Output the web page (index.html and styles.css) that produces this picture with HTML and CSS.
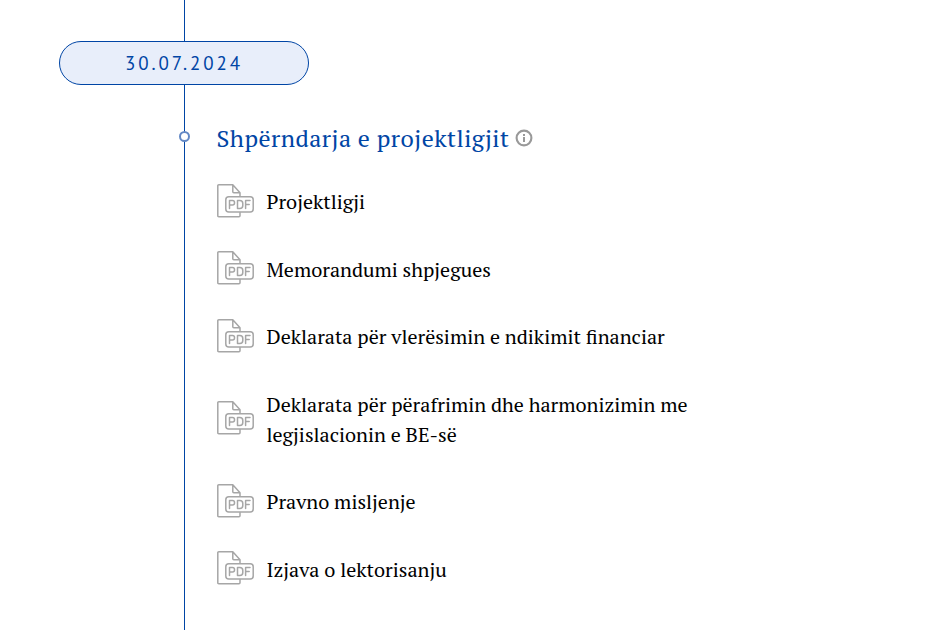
FILE: index.html
```html
<!DOCTYPE html>
<html lang="sq">
<head>
<meta charset="utf-8">
<title>Shpërndarja e projektligjit</title>
<link rel="stylesheet" href="styles.css">
</head>
<body>
<svg class="defs" aria-hidden="true">
  <symbol id="pdf" viewBox="0 0 37 34">
    <g fill="none" stroke="#a6a6a6" stroke-width="1.5" stroke-linejoin="round" stroke-linecap="round">
      <path d="M23 28.5V31.8Q23 32.7 22 32.7H1.8Q.8 32.7 .8 31.7V1.8Q.8 .8 1.8 .8H15.8L23 8.8V12.3M15.8 .8V7.8Q15.8 8.8 16.8 8.8H23"/>
      <rect x="8.8" y="12.8" width="27.4" height="15.2" rx="3"/>
      <path d="M12.5 24.5V16.5H15.5Q17.5 16.5 17.5 18.5V19.1Q17.5 21.1 15.5 21.1H12.5M20.5 16.5V24.5H22.8Q25.8 24.5 25.8 21.5V19.5Q25.8 16.5 22.8 16.5ZM28.6 24.5V16.5H33M28.6 20.5H32.2"/>
    </g>
  </symbol>
</svg>
<main class="timeline">
  <div class="date">30.07.2024</div>
  <section class="event">
    <h2 class="title"><span class="title-text">Shpërndarja e projektligjit</span>
      <svg class="info" viewBox="0 0 18 18"><circle cx="9" cy="9" r="7.4" fill="none" stroke="#999" stroke-width="2.1"/><path d="M8 5h2v2H8zM8 8h2v5H8z" fill="#999"/></svg>
    </h2>
    <ul class="files">
      <li><svg class="pdf"><use href="#pdf"/></svg><span class="name">Projektligji</span></li>
      <li><svg class="pdf"><use href="#pdf"/></svg><span class="name">Memorandumi shpjegues</span></li>
      <li><svg class="pdf"><use href="#pdf"/></svg><span class="name">Deklarata për vlerësimin e ndikimit financiar</span></li>
      <li><svg class="pdf"><use href="#pdf"/></svg><span class="name">Deklarata për përafrimin dhe harmonizimin me legjislacionin e BE-së</span></li>
      <li><svg class="pdf"><use href="#pdf"/></svg><span class="name">Pravno misljenje</span></li>
      <li><svg class="pdf"><use href="#pdf"/></svg><span class="name">Izjava o lektorisanju</span></li>
    </ul>
  </section>
</main>
</body>
</html>
```
FILE: styles.css
```css
*, *::before { box-sizing: border-box; }
body { margin: 0; background: #fff; overflow: hidden; }
.defs { display: none; }
.timeline {
  height: 630px;
  padding: 41px 0 0 59px;
  background: linear-gradient(#0045a5, #0045a5) 184px 0 / 1px 100% no-repeat;
  font-family: "PT Serif", "Liberation Serif", serif;
}
.date {
  width: 250px;
  height: 44px;
  border: 1px solid #0045a5;
  border-radius: 22px;
  background: #e8eefa;
  color: #0045a5;
  font: 19px/43px "PT Sans", "Noto Sans", sans-serif;
  letter-spacing: 2.9px;
  text-align: center;
}
.event { position: relative; padding: 33px 0 0 158px; }
.event::before {
  content: "";
  position: absolute;
  left: 120px;
  top: 46px;
  width: 11px;
  height: 11px;
  border: 2px solid #6288c5;
  border-radius: 50%;
  background: #fff;
}
.title {
  display: flex;
  align-items: center;
  height: 40px;
  margin: 0 0 0 -0.5px;
  color: #0045a5;
  font-size: 24px;
  font-weight: 400;
}
.title-text { width: 298.5px; letter-spacing: 0.48px; white-space: nowrap; }
.info { width: 18px; height: 18px; }
.files {
  display: flex;
  flex-direction: column;
  gap: 37.5px;
  margin: 0;
  padding: 28px 0 0;
  list-style: none;
}
.files li { display: flex; align-items: center; gap: 12.5px; }
.pdf { flex: none; width: 37px; height: 34px; margin: -2.2px 0 -1.8px; }
.name { max-width: 450px; margin: 1px 0 -1px; color: #000; font-size: 20px; line-height: 30px; }
```
